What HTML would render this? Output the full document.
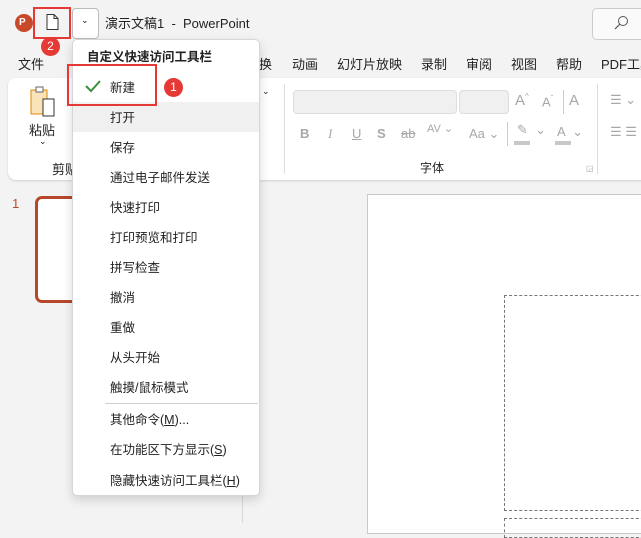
<!DOCTYPE html>
<html><head><meta charset="utf-8"><style>
*{margin:0;padding:0;box-sizing:border-box}
body{width:641px;height:523px;overflow:hidden;background:#f3f3f3;font-family:"Liberation Sans","Noto Sans CJK SC",sans-serif;font-size:13px;color:#222;position:relative}
.a{position:absolute;white-space:nowrap}
.g{color:#a8a8a8}
.mi{position:absolute;left:110px;font-size:12.5px;color:#222}
</style></head><body>
<!-- title bar -->
<div class="a" style="left:15px;top:14px;width:18px;height:18px;border-radius:50%;background:#c8492a;color:#fff;font-size:10px;font-weight:bold;line-height:18px;padding-left:4px">P</div>
<svg class="a" style="left:44px;top:13px" width="16" height="18"><path d="M3 1.5h7l4 4v11H3z M10 1.5v4h4" fill="#fff" stroke="#333" stroke-width="1"/></svg>
<div class="a" style="left:33px;top:7px;width:38px;height:32px;border:2px solid #e53935"></div>
<div class="a" style="left:41px;top:37px;width:19px;height:19px;border-radius:50%;background:#e53935;color:#fff;font-size:12px;text-align:center;line-height:19px">2</div>
<div class="a" style="left:72px;top:8px;width:27px;height:31px;border:1px solid #bbb;border-radius:4px;background:#fff"></div>
<div class="a" style="left:81px;top:15px;font-size:9px">⌄</div>
<div class="a" style="left:105px;top:13px;font-size:13px">演示文稿1 &nbsp;- &nbsp;PowerPoint</div>
<div class="a" style="left:592px;top:8px;width:60px;height:32px;border:1px solid #ccc;border-radius:5px;background:#fafafa"></div>
<svg class="a" style="left:613px;top:15px" width="16" height="16"><circle cx="10" cy="6" r="4.5" fill="none" stroke="#555"/><path d="M7 9L2 14" stroke="#555" stroke-width="1.2"/></svg>
<!-- tabs -->
<div class="a" style="left:18px;top:54px">文件</div>
<div class="a" style="left:259px;top:54px">换</div>
<div class="a" style="left:292px;top:54px">动画</div>
<div class="a" style="left:337px;top:54px">幻灯片放映</div>
<div class="a" style="left:421px;top:54px">录制</div>
<div class="a" style="left:466px;top:54px">审阅</div>
<div class="a" style="left:511px;top:54px">视图</div>
<div class="a" style="left:556px;top:54px">帮助</div>
<div class="a" style="left:601px;top:54px">PDF工具</div>
<!-- ribbon -->
<div class="a" style="left:8px;top:78px;width:660px;height:102px;background:#fff;border-radius:8px;box-shadow:0 1px 2px rgba(0,0,0,.15)"></div>
<svg class="a" style="left:29px;top:85px" width="30" height="34"><rect x="2" y="5" width="16" height="24" fill="#fbe3b9" stroke="#e08a00"/><rect x="7" y="2" width="7" height="5" fill="#fff" stroke="#666"/><rect x="14" y="14" width="11" height="17" fill="#fff" stroke="#333"/></svg>
<div class="a" style="left:29px;top:120px">粘贴</div>
<div class="a" style="left:39px;top:136px;font-size:9px">⌄</div>
<div class="a" style="left:52px;top:159px">剪贴</div>
<div class="a" style="left:262px;top:86px;font-size:9px">⌄</div>
<div class="a" style="left:284px;top:84px;width:1px;height:90px;background:#ddd"></div>
<div class="a" style="left:293px;top:90px;width:164px;height:24px;background:#f0f0f0;border:1px solid #ddd;border-radius:4px"></div>
<div class="a" style="left:459px;top:90px;width:50px;height:24px;background:#f0f0f0;border:1px solid #ddd;border-radius:4px"></div>
<div class="a g" style="left:515px;top:92px;font-size:15px">A<sup style="font-size:8px">^</sup></div>
<div class="a g" style="left:542px;top:94px;font-size:13px">A<sup style="font-size:8px">ˇ</sup></div>
<div class="a" style="left:563px;top:90px;width:1px;height:24px;background:#ccc"></div>
<div class="a g" style="left:569px;top:92px;font-size:15px">A</div>
<div class="a g" style="left:300px;top:126px;font-weight:bold">B</div>
<div class="a g" style="left:328px;top:126px;font-style:italic;font-family:'Liberation Serif',serif">I</div>
<div class="a g" style="left:352px;top:126px;text-decoration:underline">U</div>
<div class="a g" style="left:377px;top:126px;font-weight:bold">S</div>
<div class="a g" style="left:401px;top:126px;text-decoration:line-through">ab</div>
<div class="a g" style="left:427px;top:122px;font-size:11px">AV ⌄</div>
<div class="a g" style="left:469px;top:126px">Aa ⌄</div>
<div class="a" style="left:507px;top:122px;width:1px;height:24px;background:#ccc"></div>
<div class="a" style="left:514px;top:141px;width:16px;height:4px;background:#c8c8c8"></div>
<div class="a g" style="left:517px;top:122px">✎ &nbsp;⌄</div>
<div class="a g" style="left:557px;top:124px">A &nbsp;⌄</div>
<div class="a" style="left:555px;top:141px;width:16px;height:4px;background:#c8c8c8"></div>
<div class="a" style="left:420px;top:159px;font-size:12px">字体</div>
<div class="a g" style="left:586px;top:164px;font-size:8px">◲</div>
<div class="a" style="left:597px;top:84px;width:1px;height:90px;background:#ddd"></div>
<div class="a g" style="left:610px;top:92px">☰ ⌄</div>
<div class="a g" style="left:610px;top:124px">☰ ☰</div>
<!-- left pane -->
<div class="a" style="left:12px;top:196px;color:#c0482a;font-size:13px">1</div>
<div class="a" style="left:35px;top:196px;width:60px;height:107px;border:3px solid #b7472a;border-radius:7px;background:#fff"></div>
<div class="a" style="left:242px;top:180px;width:1px;height:343px;background:#d8d8d8"></div>
<!-- slide -->
<div class="a" style="left:367px;top:194px;width:300px;height:340px;background:#fff;border:1px solid #c8c8c8"></div>
<div class="a" style="left:504px;top:295px;width:150px;height:216px;border:1px dashed #777"></div>
<div class="a" style="left:504px;top:518px;width:150px;height:20px;border:1px dashed #777"></div>
<!-- menu -->
<div class="a" style="left:72px;top:39px;width:188px;height:457px;background:#fff;border:1px solid #d6d6d6;border-radius:5px;box-shadow:0 4px 10px rgba(0,0,0,.15)"></div>
<div class="a" style="left:87px;top:46px;font-size:12.5px;font-weight:bold">自定义快速访问工具栏</div>
<div class="a" style="left:73px;top:102px;width:186px;height:30px;background:#f0f0f0"></div>
<svg class="a" style="left:84px;top:79px" width="18" height="14"><path d="M2 7l5 5L16 2" fill="none" stroke="#3a8f3a" stroke-width="2"/></svg>
<div class="mi" style="top:77px">新建</div>
<div class="mi" style="top:107px">打开</div>
<div class="mi" style="top:137px">保存</div>
<div class="mi" style="top:167px">通过电子邮件发送</div>
<div class="mi" style="top:197px">快速打印</div>
<div class="mi" style="top:227px">打印预览和打印</div>
<div class="mi" style="top:257px">拼写检查</div>
<div class="mi" style="top:287px">撤消</div>
<div class="mi" style="top:317px">重做</div>
<div class="mi" style="top:347px">从头开始</div>
<div class="mi" style="top:377px">触摸/鼠标模式</div>
<div class="a" style="left:105px;top:403px;width:153px;height:1px;background:#d0d0d0"></div>
<div class="mi" style="top:409px">其他命令(<u>M</u>)...</div>
<div class="mi" style="top:439px">在功能区下方显示(<u>S</u>)</div>
<div class="mi" style="top:470px">隐藏快速访问工具栏(<u>H</u>)</div>
<div class="a" style="left:67px;top:64px;width:90px;height:42px;border:2px solid #e53935"></div>
<div class="a" style="left:164px;top:78px;width:19px;height:19px;border-radius:50%;background:#e53935;color:#fff;font-size:12px;text-align:center;line-height:19px">1</div>
</body></html>
